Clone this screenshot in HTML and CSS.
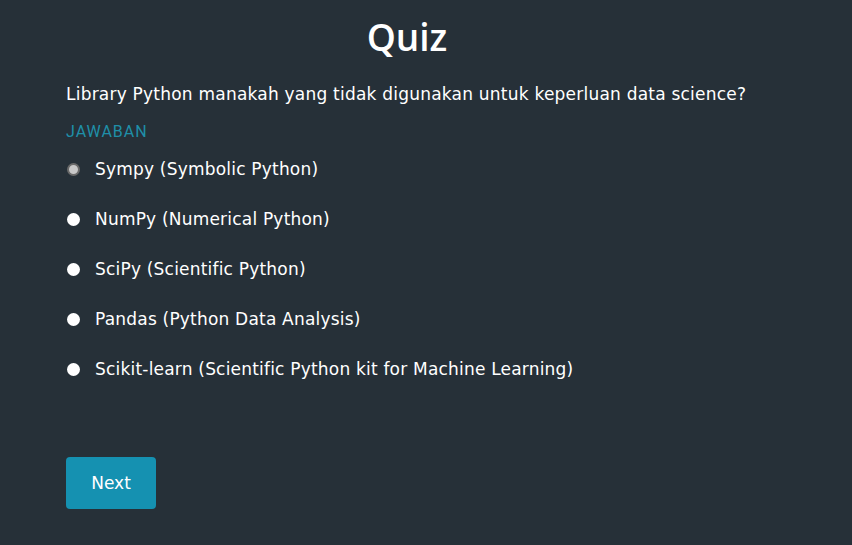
FILE: index.html
```html
<!DOCTYPE html>
<html>
<head>
<meta charset="utf-8">
<link rel="stylesheet" href="styles.css">
</head>
<body>
<main class="quiz">
  <h1 class="title">Quiz</h1>
  <p class="question">Library Python manakah yang tidak digunakan untuk keperluan data science?</p>
  <div class="label">JAWABAN</div>
  <ul class="options">
    <li class="option"><span class="radio radio-focus"></span><span class="option-text">Sympy (Symbolic Python)</span></li>
    <li class="option"><span class="radio"></span><span class="option-text">NumPy (Numerical Python)</span></li>
    <li class="option"><span class="radio"></span><span class="option-text">SciPy (Scientific Python)</span></li>
    <li class="option"><span class="radio"></span><span class="option-text">Pandas (Python Data Analysis)</span></li>
    <li class="option"><span class="radio"></span><span class="option-text">Scikit-learn (Scientific Python kit for Machine Learning)</span></li>
  </ul>
  <button class="next">Next</button>
</main>
</body>
</html>
```

FILE: styles.css
```css
html, body {
  margin: 0;
  padding: 0;
  background: #263038;
  height: 100%;
}
body {
  font-family: "DejaVu Sans", "Open Sans", sans-serif;
  color: #ffffff;
}
.quiz {
  width: 682px;
  margin-left: 66px;
  padding-top: 12px;
}
.title {
  margin: 0;
  text-align: center;
  font-family: "Open Sans", sans-serif;
  font-size: 37px;
  font-weight: 600;
  line-height: 50px;
}
.question {
  margin: 20px 0 0;
  font-size: 17px;
  letter-spacing: 0.22px;
  line-height: 24px;
  white-space: nowrap;
}
.label {
  margin-top: 16px;
  font-family: Roboto, sans-serif;
  font-size: 16px;
  line-height: 20px;
  color: #1f8fa8;
  letter-spacing: 1px;
}
.options {
  list-style: none;
  margin: 2px 0 0;
  padding: 0;
  display: flex;
  flex-direction: column;
}
.option {
  display: flex;
  align-items: center;
  height: 50px;
}
.radio {
  width: 13px;
  height: 13px;
  border-radius: 50%;
  background: #ffffff;
  margin-left: 1px;
  margin-right: 15px;
  box-sizing: border-box;
}
.radio-focus {
  background: #c8c8c8;
  border: 2px solid #6a6a6a;
}
.option-text {
  font-size: 17px;
  letter-spacing: 0.2px;
}
.next {
  display: block;
  margin-top: 63px;
  width: 90px;
  height: 52px;
  border: none;
  border-radius: 4px;
  background: #1591b1;
  color: #ffffff;
  font-family: "DejaVu Sans", sans-serif;
  font-size: 17px;
  cursor: pointer;
}
```
